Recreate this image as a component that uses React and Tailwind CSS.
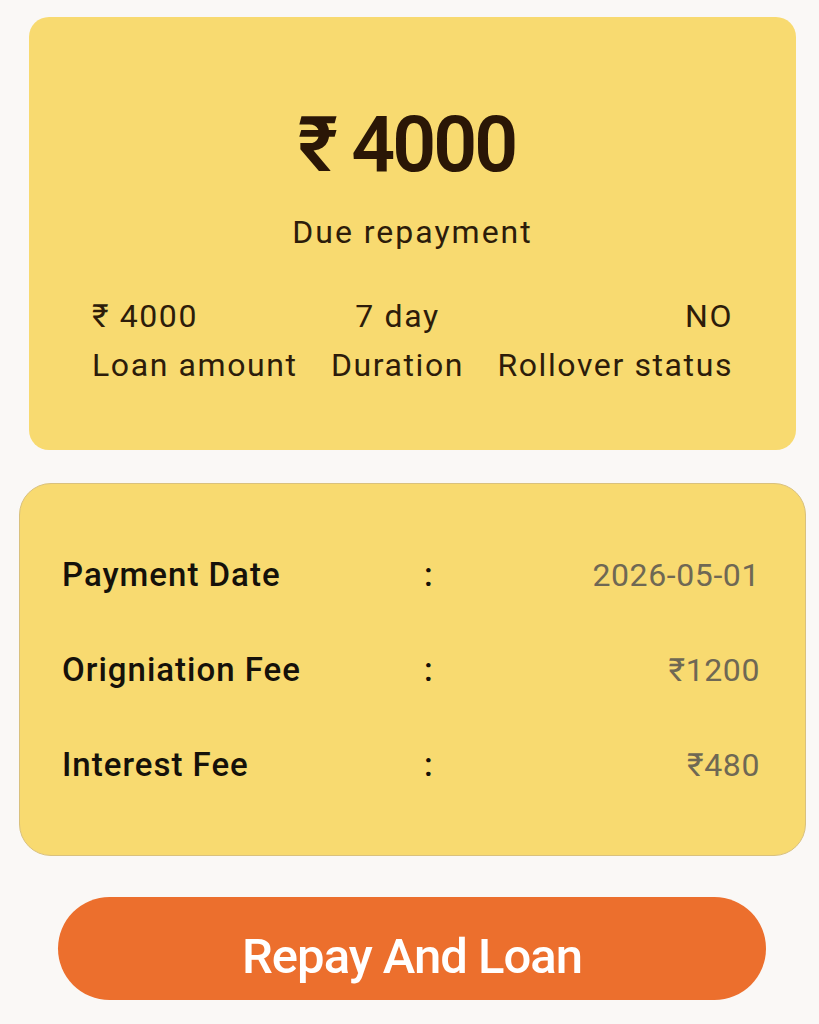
export default function App() {
  const font = { fontFamily: "Roboto, 'Noto Sans', 'DejaVu Sans', sans-serif" };
  const rows = [
    { label: "Payment Date", value: "2026-05-01" },
    { label: "Origniation Fee", value: "₹1200" },
    { label: "Interest Fee", value: "₹480" },
  ];
  return (
    <div className="min-h-[1024px] w-[819px] bg-[#faf8f6] pt-[17px]" style={font}>
      <div className="ml-[29px] w-[767px] rounded-[20px] bg-[#f8da70] pt-[88px] pb-[60px] px-[63px]">
        <div className="pr-[12px] text-center text-[77px] leading-[80px] font-semibold tracking-[-3px] text-[#2a1606]">
          ₹ 4000
        </div>
        <div className="mt-[27px] text-center text-[32px] leading-[40px] tracking-[2px] text-[#2d1c0a]">
          Due repayment
        </div>
        <div className="mt-[40px] flex justify-between text-[32px] leading-[49px] tracking-[1.6px] text-[#2d1c0a]">
          <div className="flex flex-col items-start">
            <span>₹ 4000</span>
            <span>Loan amount</span>
          </div>
          <div className="flex flex-col items-center">
            <span>7 day</span>
            <span>Duration</span>
          </div>
          <div className="flex flex-col items-end">
            <span>NO</span>
            <span>Rollover status</span>
          </div>
        </div>
      </div>

      <div className="mt-[33px] ml-[19px] w-[787px] rounded-[32px] border border-[#d9c17e] bg-[#f8da70] py-[43px] pl-[42px] pr-[45px]">
        {rows.map((r) => (
          <div key={r.label} className="flex h-[95px] items-center">
            <div className="w-[362px] text-[33px] leading-[40px] font-medium tracking-[1px] text-[#15110a]">
              {r.label}
            </div>
            <div className="text-[33px] leading-[40px] font-medium text-[#15110a]">:</div>
            <div className="flex-1 text-right text-[32px] leading-[40px] tracking-[0.6px] text-[#6f6854]">
              {r.value}
            </div>
          </div>
        ))}
      </div>

      <div className="mt-[41px] ml-[58px] flex h-[103px] w-[708px] items-center justify-center rounded-full bg-[#ec6f2d] pt-[16px]">
        <span className="text-[49px] leading-[60px] font-medium tracking-[-1px] text-white">
          Repay And Loan
        </span>
      </div>
    </div>
  );
}
